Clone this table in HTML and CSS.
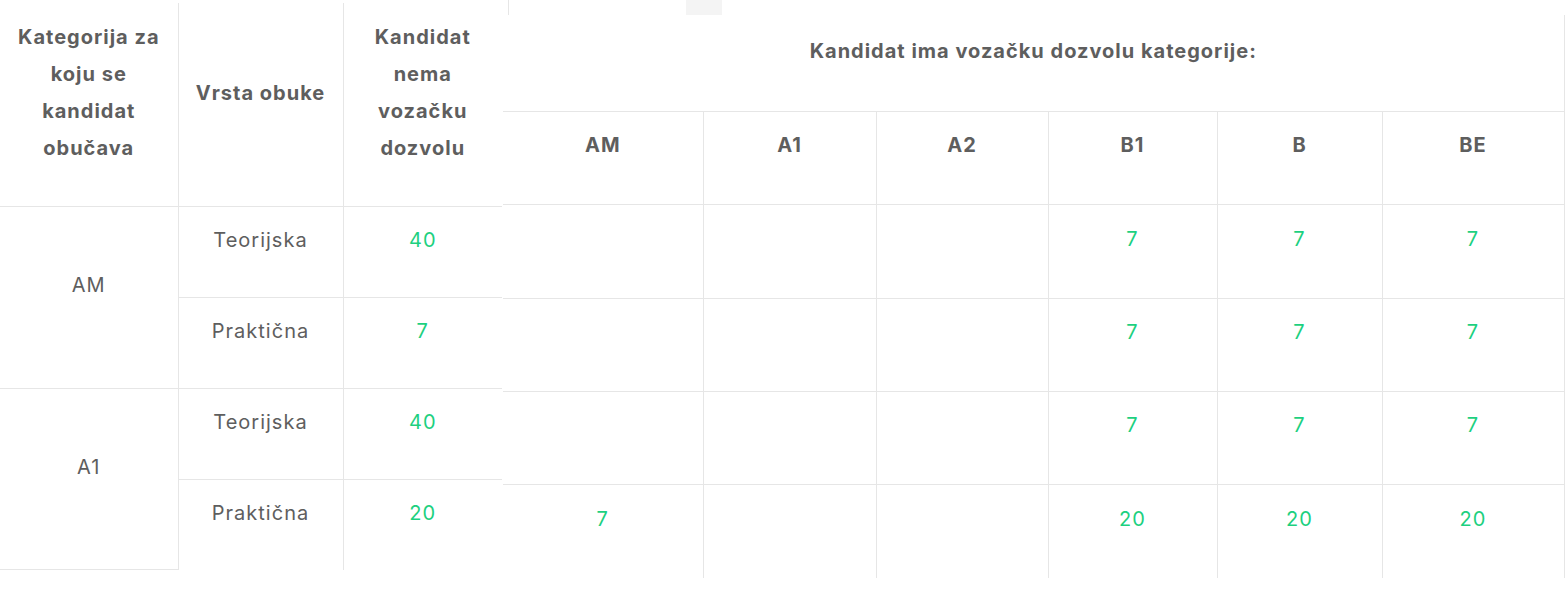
FILE: index.html
```html
<!DOCTYPE html>
<html lang="sr">
<head>
<meta charset="utf-8">
<title>Kategorije</title>
<link rel="stylesheet" href="styles.css">
</head>
<body>
<div class="page">
  <table class="tbl left">
    <colgroup><col class="c1"><col class="c2"><col class="c3"></colgroup>
    <thead>
      <tr class="head">
        <th class="br bb">Kategorija za koju se kandidat obučava</th>
        <th class="br bb">Vrsta obuke</th>
        <th class="bb">Kandidat nema vozačku dozvolu</th>
      </tr>
    </thead>
    <tbody>
      <tr class="row">
        <td rowspan="2" class="br bb">AM</td>
        <td class="br bb">Teorijska</td>
        <td class="num bb">40</td>
      </tr>
      <tr class="row">
        <td class="br bb">Praktična</td>
        <td class="num bb">7</td>
      </tr>
      <tr class="row">
        <td rowspan="2" class="br bb">A1</td>
        <td class="br bb">Teorijska</td>
        <td class="num bb">40</td>
      </tr>
      <tr class="row">
        <td class="br">Praktična</td>
        <td class="num">20</td>
      </tr>
    </tbody>
  </table>

  <div class="right">
    <div class="strip"><span class="tick"></span><span class="thumb"></span></div>
    <table class="tbl wide">
      <colgroup><col class="r1"><col class="r2"><col class="r3"><col class="r4"><col class="r5"><col class="r6"></colgroup>
      <thead>
        <tr class="top"><th colspan="6" class="bb">Kandidat ima vozačku dozvolu kategorije:</th></tr>
        <tr class="sub">
          <th class="br bb">AM</th><th class="br bb">A1</th><th class="br bb">A2</th><th class="br bb">B1</th><th class="br bb">B</th><th class="bb">BE</th>
        </tr>
      </thead>
      <tbody>
        <tr class="rrow">
          <td class="br bb"></td><td class="br bb"></td><td class="br bb"></td><td class="num br bb">7</td><td class="num br bb">7</td><td class="num bb">7</td>
        </tr>
        <tr class="rrow">
          <td class="br bb"></td><td class="br bb"></td><td class="br bb"></td><td class="num br bb">7</td><td class="num br bb">7</td><td class="num bb">7</td>
        </tr>
        <tr class="rrow">
          <td class="br bb"></td><td class="br bb"></td><td class="br bb"></td><td class="num br bb">7</td><td class="num br bb">7</td><td class="num bb">7</td>
        </tr>
        <tr class="rrow">
          <td class="num br">7</td><td class="br"></td><td class="br"></td><td class="num br">20</td><td class="num br">20</td><td class="num">20</td>
        </tr>
      </tbody>
    </table>
  </div>
</div>
</body>
</html>
```

FILE: styles.css
```css
* { box-sizing: border-box; }
html, body { margin: 0; padding: 0; background: #fff; }
body {
  font-family: Inter, "Noto Sans", "Liberation Sans", sans-serif;
  color: #5e5e5e;
}
.page {
  display: flex;
  align-items: flex-start;
  gap: 1px;
}
.tbl {
  border-collapse: collapse;
  table-layout: fixed;
}
.tbl th, .tbl td {
  padding: 15px 8px 39px;
  text-align: center;
  vertical-align: middle;
}
.tbl th {
  font-weight: 700;
  font-size: 20px;
  letter-spacing: 1px;
  line-height: 37px;
}
.tbl td {
  font-weight: 400;
  font-size: 20px;
  letter-spacing: 1px;
  line-height: 37px;
}
.tbl .num { color: #1dd07f; }
.br { border-right: 1px solid #e6e6e6; }
.bb { border-bottom: 1px solid #e6e6e6; }

.left { width: 502px; margin-top: 3px; }
.left .c1 { width: 178px; }
.left .c2 { width: 165px; }
.left .c3 { width: 159px; }
.left .head th { height: 203px; padding: 16px 10px 38px; }
.left .row td { height: 90px; padding: 15px 8px 38px; }

.right { width: 1061px; }
.strip {
  height: 15px;
  display: flex;
  align-items: stretch;
}
.tick {
  width: 1px;
  margin-left: 5px;
  background: #e6e6e6;
}
.thumb {
  width: 36px;
  margin-left: 177px;
  background: #f4f4f4;
}
.wide {
  width: 1061px;
  border-right: 1px solid #e6e6e6;
}
.wide .r1 { width: 200px; }
.wide .r2 { width: 173px; }
.wide .r3 { width: 172px; }
.wide .r4 { width: 169px; }
.wide .r5 { width: 165px; }
.wide .r6 { width: 182px; }
.wide .top th { height: 96px; padding: 18px 10px 40px; }
.wide .sub th { height: 93px; }
.wide .rrow td { height: 94px; }
.wide .rrow:nth-child(2) td,
.wide .rrow:nth-child(3) td { height: 93px; }
```
